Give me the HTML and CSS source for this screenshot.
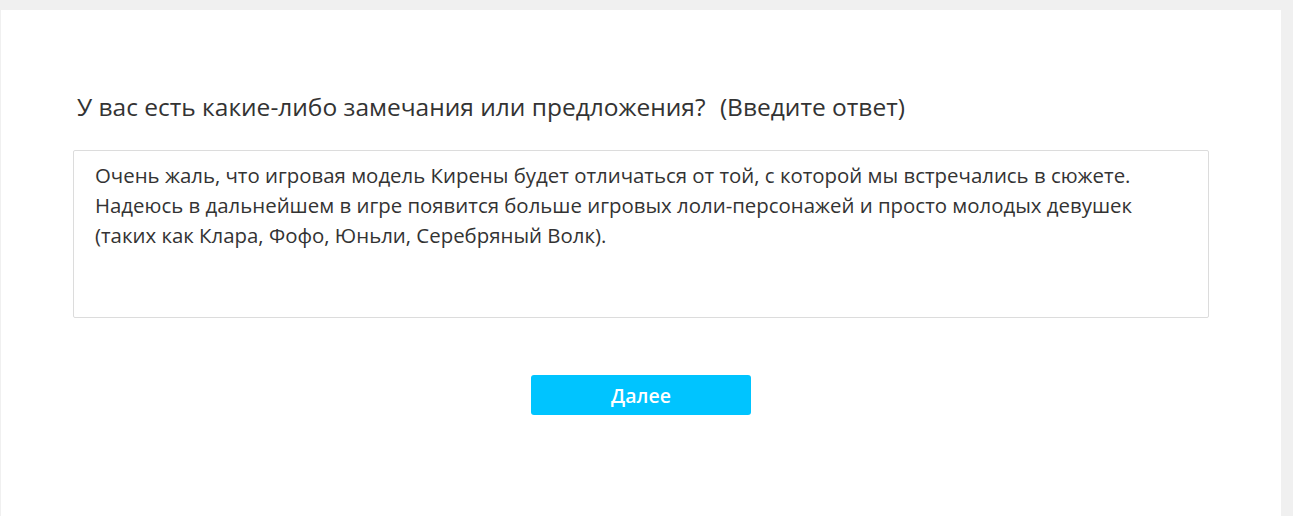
FILE: index.html
```html
<!DOCTYPE html>
<html lang="ru">
<head>
<meta charset="utf-8">
<link rel="stylesheet" href="styles.css">
</head>
<body>
<div class="card">
  <div class="question">
    <span class="q-title">У вас есть какие-либо замечания или предложения?</span>
    <span class="q-hint">(Введите ответ)</span>
  </div>
  <div class="answer">Очень жаль, что игровая модель Кирены будет отличаться от той, с которой мы встречались в сюжете. Надеюсь в дальнейшем в игре появится больше игровых лоли-персонажей и просто молодых девушек (таких как Клара, Фофо, Юньли, Серебряный Волк).</div>
  <div class="actions">
    <button class="next">Далее</button>
  </div>
</div>
</body>
</html>
```
FILE: styles.css
```css
html, body {
  margin: 0;
  padding: 0;
  height: 100%;
}
body {
  background: #f0f0f0;
  font-family: "Open Sans", "Noto Sans", sans-serif;
  color: #333;
  padding: 10px 12px 0 1px;
  box-sizing: border-box;
  overflow: hidden;
}
.card {
  background: #fff;
  height: 100%;
  padding: 82px 72px 0 72px;
  box-sizing: border-box;
}
.question {
  font-size: 24.5px;
  line-height: 30px;
  padding-left: 4px;
  color: #333;
  white-space: nowrap;
}
.q-hint {
  margin-left: 8px;
}
.answer {
  margin-top: 28px;
  width: 1136px;
  height: 168px;
  box-sizing: border-box;
  border: 1px solid #dcdcdc;
  border-radius: 2px;
  padding: 9px 21px;
  font-size: 20.4px;
  line-height: 30px;
  color: #333;
}
.actions {
  display: flex;
  justify-content: center;
  width: 1136px;
  margin-top: 57px;
}
.next {
  width: 220px;
  height: 40px;
  border: none;
  border-radius: 3px;
  background: #00c4ff;
  color: #fff;
  font-family: inherit;
  font-size: 19.5px;
  font-weight: 600;
  cursor: pointer;
}
```
